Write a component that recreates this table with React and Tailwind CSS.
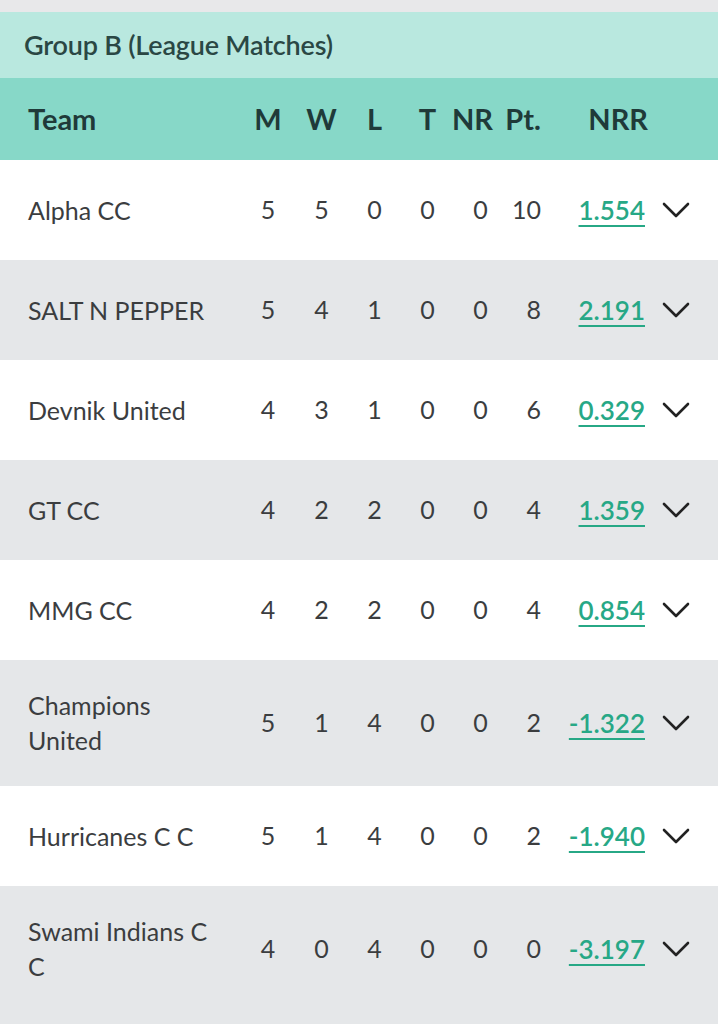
const teams = [
	{ name: 'Alpha CC', m: 5, w: 5, l: 0, t: 0, nr: 0, pt: 10, nrr: '1.554' },
	{ name: 'SALT N PEPPER', m: 5, w: 4, l: 1, t: 0, nr: 0, pt: 8, nrr: '2.191' },
	{ name: 'Devnik United', m: 4, w: 3, l: 1, t: 0, nr: 0, pt: 6, nrr: '0.329' },
	{ name: 'GT CC', m: 4, w: 2, l: 2, t: 0, nr: 0, pt: 4, nrr: '1.359' },
	{ name: 'MMG CC', m: 4, w: 2, l: 2, t: 0, nr: 0, pt: 4, nrr: '0.854' },
	{ name: 'Champions United', m: 5, w: 1, l: 4, t: 0, nr: 0, pt: 2, nrr: '-1.322' },
	{ name: 'Hurricanes C C', m: 5, w: 1, l: 4, t: 0, nr: 0, pt: 2, nrr: '-1.940' },
	{ name: 'Swami Indians C C', m: 4, w: 0, l: 4, t: 0, nr: 0, pt: 0, nrr: '-3.197' }
];

const font = { fontFamily: 'Lato, "Open Sans", sans-serif' };

// Wide, thin chevron used for row expand
const Chevron = () => (
	<svg width="30" height="18" viewBox="0 0 30 18" className="ml-[16px] shrink-0">
		<polyline
			points="3,3 15,15 27,3"
			fill="none"
			stroke="#222"
			strokeWidth="2.6"
			strokeLinecap="round"
			strokeLinejoin="round"
		/>
	</svg>
);

const App = () => {
	return (
		<div className="w-[718px] min-h-[1024px] bg-[#e5e7e9] overflow-hidden" style={font}>
			<div className="h-3 bg-[#e8e8ea]" />
			<div className="h-[66px] bg-[#b9e8df] flex items-center px-6">
				<h2 className="text-[27px] font-semibold text-[#2a4744] tracking-[-0.2px]">
					Group B (League Matches)
				</h2>
			</div>

			{/* header row */}
			<div className="h-[82px] bg-[#87d8c8] flex items-center pl-7 text-[29px] font-bold text-[#1f3a39]">
				<div className="w-[213px]">Team</div>
				<div className="w-[54px] text-center">M</div>
				<div className="w-[53px] text-center">W</div>
				<div className="w-[53px] text-center">L</div>
				<div className="w-[53px] text-center">T</div>
				<div className="w-[53px] text-left -ml-[2px]">NR</div>
				<div className="w-[36px] text-right whitespace-nowrap">Pt.</div>
				<div className="w-[107px] text-right">NRR</div>
			</div>

			{teams.map((team, i) => (
				<div
					key={team.name}
					className={`flex items-center pl-7 text-[25px] text-[#3b3d3f] ${
						i % 2 === 0 ? 'bg-white' : 'bg-[#e5e7e9]'
					} ${team.name.length > 15 ? 'h-[126px]' : 'h-[100px]'}`}
				>
					<div className="w-[213px] pr-3 leading-[35px]">{team.name}</div>
					<div className="w-[54px] text-center">{team.m}</div>
					<div className="w-[53px] text-center">{team.w}</div>
					<div className="w-[53px] text-center">{team.l}</div>
					<div className="w-[53px] text-center">{team.t}</div>
					<div className="w-[53px] text-center">{team.nr}</div>
					<div className="w-[34px] text-right">{team.pt}</div>
					<div className="w-[104px] text-right text-[26px] font-semibold text-[#27a886] underline underline-offset-[5px] decoration-2">
						{team.nrr}
					</div>
					<Chevron />
				</div>
			))}
		</div>
	);
};

export default App;
